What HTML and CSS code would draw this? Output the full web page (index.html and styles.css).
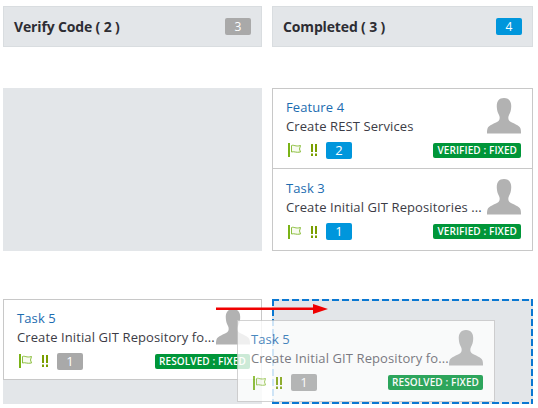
FILE: index.html
```html
<!DOCTYPE html>
<html lang="en">
<head>
    <meta charset="UTF-8">
    <meta name="viewport" content="width=device-width, initial-scale=1.0">
    <title>Task Board</title>
    <link rel="stylesheet" href="styles.css">
</head>
<body>

<svg class="defs" width="0" height="0">
    <symbol id="flag" viewBox="0 0 14 14">
        <rect x="0" y="0" width="2" height="14" fill="#7ab317"/>
        <path d="M3.500 2.500 C6 1.500 7.500 4 12.500 2.500 L11.500 6 L12.500 9 C8 10 6 8 3.500 9 Z" fill="#f8fbf0" stroke="#8cbf3f" stroke-width="1"/>
    </symbol>
    <symbol id="urgent" viewBox="0 0 6 12">
        <path d="M0 0H2V8H0ZM4 0H6V8H4ZM0 9.500H2V12H0ZM4 9.500H6V12H4Z" fill="#7a9e00"/>
    </symbol>
    <symbol id="avatar" viewBox="0 0 34 36">
        <path d="M17 0C11.500 0 9.500 4 9.800 9C10 12 10.500 14.500 12 17C13 19 13 21.500 11.500 23C8 25.500 1.500 27 0.500 30.500C0 32 0 34 0 35.500H34C34 34 34 32 33.500 30.500C32.500 27 26 25.500 22.500 23C21 21.500 21 19 22 17C23.500 14.500 24 12 24.200 9C24.500 4 22.500 0 17 0Z" fill="currentColor"/>
    </symbol>
</svg>

<div class="board">
    <div class="lane-head">
        <h2>Verify Code ( 2 )</h2>
        <span class="count grey">3</span>
    </div>
    <div class="lane-head">
        <h2>Completed ( 3 )</h2>
        <span class="count blue">4</span>
    </div>

    <div class="lane"></div>
    <div class="lane">
        <div class="card">
            <div class="card-text">
                <a class="card-title">Feature 4</a>
                <p class="card-desc">Create REST Services</p>
            </div>
            <svg class="avatar"><use href="#avatar"/></svg>
            <div class="card-meta">
                <svg class="flag"><use href="#flag"/></svg>
                <svg class="urgent"><use href="#urgent"/></svg>
                <span class="points blue">2</span>
                <span class="status">VERIFIED : FIXED</span>
            </div>
        </div>
        <div class="card">
            <div class="card-text">
                <a class="card-title">Task 3</a>
                <p class="card-desc">Create Initial GIT Repositories ...</p>
            </div>
            <svg class="avatar"><use href="#avatar"/></svg>
            <div class="card-meta">
                <svg class="flag"><use href="#flag"/></svg>
                <svg class="urgent"><use href="#urgent"/></svg>
                <span class="points blue">1</span>
                <span class="status">VERIFIED : FIXED</span>
            </div>
        </div>
    </div>

    <div class="lane lane-bottom">
        <div class="card">
            <div class="card-text">
                <a class="card-title">Task 5</a>
                <p class="card-desc">Create Initial GIT Repository fo...</p>
            </div>
            <svg class="avatar"><use href="#avatar"/></svg>
            <div class="card-meta">
                <svg class="flag"><use href="#flag"/></svg>
                <svg class="urgent"><use href="#urgent"/></svg>
                <span class="points grey">1</span>
                <span class="status">RESOLVED : FIXED</span>
            </div>
        </div>
    </div>
    <div class="lane lane-bottom drop-target"></div>
</div>

<div class="card card-ghost">
    <div class="card-text">
        <a class="card-title">Task 5</a>
        <p class="card-desc">Create Initial GIT Repository fo...</p>
    </div>
    <svg class="avatar"><use href="#avatar"/></svg>
    <div class="card-meta">
        <svg class="flag"><use href="#flag"/></svg>
        <svg class="urgent"><use href="#urgent"/></svg>
        <span class="points grey">1</span>
        <span class="status">RESOLVED : FIXED</span>
    </div>
</div>

<svg class="drag-arrow" width="112" height="10" viewBox="0 0 112 10">
    <rect x="0" y="3.500" width="98" height="2.500" fill="#f00000"/>
    <path d="M97 0L112 5L97 10Z" fill="#f00000"/>
</svg>

</body>
</html>
```

FILE: styles.css
```css
body {
    font-family: 'Open Sans', 'Noto Sans', sans-serif;
    margin: 0;
    padding: 0;
    background: #fff;
    color: #333;
}

.defs {
    position: absolute;
}

.board {
    display: grid;
    grid-template-columns: 259px 261px;
    grid-template-rows: 41px 163px 112px;
    column-gap: 10px;
    row-gap: 41px;
    padding: 6px 0 0 3px;
}

.lane-head {
    display: flex;
    justify-content: space-between;
    align-items: center;
    box-sizing: border-box;
    background-color: #e3e6e9;
    border: 1px solid #d9dde0;
    padding: 0 10px;
}

.lane-head h2 {
    margin: 0;
    font-size: 14px;
    font-weight: 700;
    letter-spacing: -0.15px;
    color: #2d2d33;
}

.count {
    width: 26px;
    height: 17px;
    line-height: 17px;
    border-radius: 2px;
    text-align: center;
    font-size: 12px;
    color: #fff;
}

.grey {
    background-color: #a9a9a9;
}

.blue {
    background-color: #0096dc;
}

.lane {
    background-color: #e3e6e9;
}

.lane-bottom {
    margin-top: 7px;
}

/* long dashes, a plain dashed border draws them too short */
.drop-target {
    background-image:
        linear-gradient(to right, #0a78d2 7px, transparent 7px),
        linear-gradient(to right, #0a78d2 7px, transparent 7px),
        linear-gradient(to bottom, #0a78d2 7px, transparent 7px),
        linear-gradient(to bottom, #0a78d2 7px, transparent 7px);
    background-size: 10px 2px, 10px 2px, 2px 10px, 2px 10px;
    background-position: 0 0, 0 100%, 0 0, 100% 0;
    background-repeat: repeat-x, repeat-x, repeat-y, repeat-y;
}

.card {
    display: grid;
    grid-template-columns: 1fr 34px;
    box-sizing: border-box;
    height: 81px;
    padding: 9px 11px 0 13px;
    background-color: #fff;
    border: 1px solid #c8c8c8;
}

.card + .card {
    height: 82px;
    border-top: 0;
    padding-top: 10px;
}

.card-text {
    min-width: 0;
}

.card-title {
    display: block;
    font-size: 13px;
    line-height: 19px;
    letter-spacing: 0.1px;
    color: #1c6cb0;
}

.card-desc {
    margin: 0;
    font-size: 13px;
    line-height: 19px;
    letter-spacing: 0.1px;
    white-space: nowrap;
    color: #3c3c46;
}

.avatar {
    width: 34px;
    height: 36px;
    color: #b2b2b2;
}

.card-meta {
    grid-column: 1 / 3;
    display: flex;
    align-items: center;
    height: 18px;
    margin-top: -4px;
}

.flag {
    width: 14px;
    height: 14px;
    margin-left: 2px;
}

.urgent {
    width: 6px;
    height: 12px;
    margin-left: 9px;
}

.points {
    width: 26px;
    height: 17px;
    line-height: 17px;
    margin-left: 9px;
    border-radius: 2px;
    text-align: center;
    font-size: 13px;
    color: #fff;
}

.status {
    margin-left: auto;
    padding: 0 4px;
    height: 15px;
    line-height: 15px;
    border-radius: 2px;
    background-color: #009639;
    color: #fff;
    font-size: 10px;
    font-weight: 600;
    letter-spacing: 0.1px;
    white-space: nowrap;
}

.card-ghost {
    position: absolute;
    left: 237px;
    top: 320px;
    width: 258px;
    height: 82px;
    opacity: 0.8;
}

.card-ghost .card-desc {
    color: #5f5f68;
}

.drag-arrow {
    position: absolute;
    left: 216px;
    top: 304px;
}
```
